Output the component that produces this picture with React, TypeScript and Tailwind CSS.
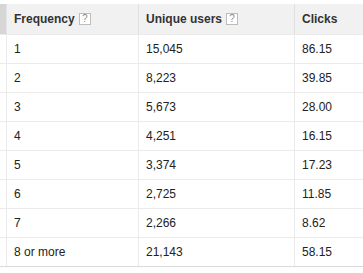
const rows = [
  ['1', '15,045', '86.15'],
  ['2', '8,223', '39.85'],
  ['3', '5,673', '28.00'],
  ['4', '4,251', '16.15'],
  ['5', '3,374', '17.23'],
  ['6', '2,725', '11.85'],
  ['7', '2,266', '8.62'],
  ['8 or more', '21,143', '58.15'],
];

function Help() {
  return (
    <span className="ml-[4px] inline-flex h-[12px] w-[12px] items-center justify-center border border-[#bdbdbd] bg-white text-[10px] leading-none font-normal text-[#8a8a8a]">
      ?
    </span>
  );
}

export default function App() {
  return (
    <div className="h-[273px] w-[363px] bg-white pt-[4px] font-['Liberation_Sans',Arial,sans-serif] text-[12px] text-[#222]">
      <div className="grid grid-cols-[7px_132px_156px_1fr] border-b border-[#d9d9d9]">
        <div className="h-[30px] border-r border-[#e4e4e4] bg-[#d6d6d6]" />
        <div className="flex h-[30px] items-center border-r border-[#e0e0e0] bg-[#f1f1f1] pl-[7px] font-bold text-[#333]">
          Frequency
          <Help />
        </div>
        <div className="flex h-[30px] items-center border-r border-[#e0e0e0] bg-[#f1f1f1] pl-[7px] font-bold text-[#333]">
          Unique users
          <Help />
        </div>
        <div className="flex h-[30px] items-center bg-[#f1f1f1] pl-[7px] font-bold text-[#333]">Clicks</div>
        {rows.map((r, i) => (
          <div key={i} className="contents">
            <div className="h-[29px] border-t border-r border-[#ebebeb]" />
            <div className="flex h-[29px] items-center border-t border-r border-[#ebebeb] pl-[7px]">{r[0]}</div>
            <div className="flex h-[29px] items-center border-t border-r border-[#ebebeb] pl-[7px]">{r[1]}</div>
            <div className="flex h-[29px] items-center border-t border-[#ebebeb] pl-[7px]">{r[2]}</div>
          </div>
        ))}
      </div>
    </div>
  );
}
